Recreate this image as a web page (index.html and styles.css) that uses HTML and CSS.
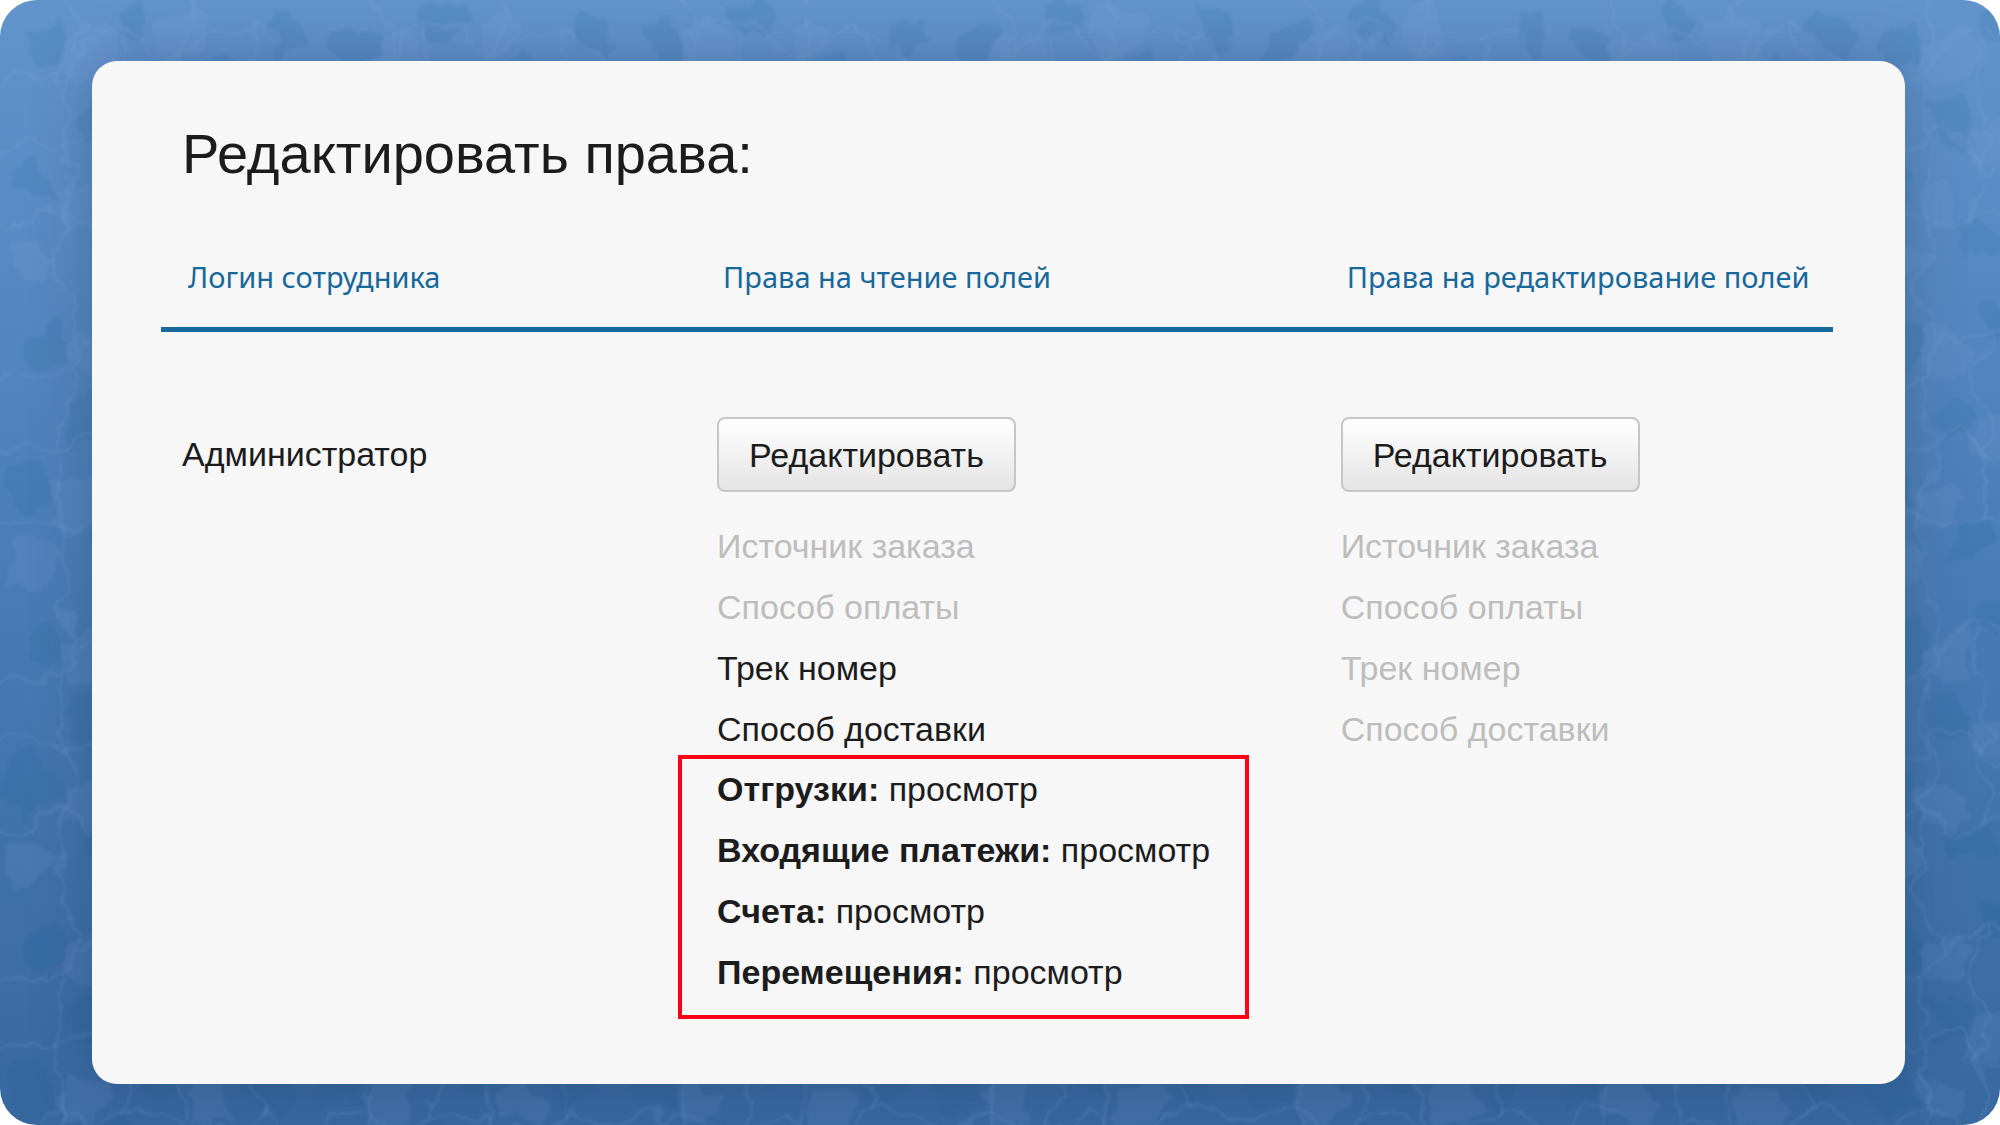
FILE: index.html
```html
<!DOCTYPE html>
<html lang="ru">
<head>
<meta charset="UTF-8">
<meta name="viewport" content="width=device-width, initial-scale=1">
<title>Редактировать права</title>
<link rel="stylesheet" href="styles.css">
</head>

<body>
<div class="page">
  <svg class="water" width="100%" height="100%" aria-hidden="true">
	<defs>
		<filter id="ripple" x="0" y="0" width="100%" height="100%">
			<feTurbulence type="fractalNoise" baseFrequency=".022" numOctaves="3" seed="4" result="noise"/>
			<feDisplacementMap in="SourceGraphic" in2="noise" scale="44" xChannelSelector="R" yChannelSelector="G"/>
			<feGaussianBlur stdDeviation="1"/>
		</filter>
		<pattern id="cells" width="310" height="300" patternUnits="userSpaceOnUse">
			<g fill="#0a4a86" fill-opacity=".09">
				<path d="M28 30l26-6 12 14-4 24-24 8-14-16z"/>
				<path d="M112 6l30-4 12 18-10 20-26-2z"/>
				<path d="M196 66l28-8 16 20-8 24-30 2-12-18z"/>
				<path d="M70 108l26-14 14 20-8 26-22 4z"/>
				<path d="M10 170l28-10 12 16 2 28-34 8-12-20z"/>
				<path d="M148 154l32-4 8 24-14 20-28-8z"/>
				<path d="M244 168l26-12 18 18-8 32-28 4-14-20z"/>
				<path d="M96 226l30-2 10 24-18 18-26-10z"/>
				<path d="M192 240l26-8 16 16-8 26-34 2z"/>
				<path d="M272 14l22 2 8 26-16 14-20-14z"/>
			</g>
			<g fill="#8ab4e4" fill-opacity=".1">
				<path d="M66 40l32-14 20 22-8 30-32 6-16-20z"/>
				<path d="M160 18l30-10 20 20-6 28-34 6z"/>
				<path d="M236 100l34-8 20 24-14 30-36-2-10-22z"/>
				<path d="M112 120l30-6 14 26-16 22-30-8z"/>
				<path d="M54 190l28-12 22 18-8 28-34 4z"/>
				<path d="M186 194l32-10 18 22-14 22-34-4z"/>
				<path d="M8 244l34-8 16 18-12 30-34 2z"/>
				<path d="M246 236l28-2 16 22-20 24-28-14z"/>
			</g>
			<g fill="none" stroke="#8ab4e4" stroke-opacity=".14" stroke-width="3">
				<path d="M0 84c22-14 40 6 62-10s22-44 58-46 30 30 58 28 40-30 70-26 36 40 62 54"/>
				<path d="M0 152c26-20 46 8 66-8s44-12 58 12 40-4 62-10 30 22 58 18 40-26 66-12"/>
				<path d="M0 226c30 4 38-20 62-12s28 22 56 10 44-14 66 6 52-8 70-16 34 10 56 12"/>
				<path d="M62 74c14 20-6 40 4 70s-8 44-4 70-14 50 0 86"/>
				<path d="M178 56c-10 28 14 50 8 90s-14 52-2 84-8 46 6 70"/>
				<path d="M62 0c8 24 20 20 16 50M190 0c-10 20 10 32-12 56M248 30c16 32-8 48 10 70s-16 44-14 64 22 30 10 50"/>
				<path d="M120 28c10 30-14 50 4 78s2 32 0 50 4 46-6 68"/>
			</g>
		</pattern>
	</defs>
	<g filter="url(#ripple)">
		<rect x="-5%" y="-5%" width="110%" height="110%" fill="url(#cells)"/>
	</g>
  </svg>

  <main class="card">
	<h1 class="title">Редактировать права:</h1>

	<table class="rights">
		<colgroup>
			<col class="col-login">
			<col class="col-read">
			<col class="col-edit">
		</colgroup>
		<thead>
			<tr>
				<th scope="col">Логин сотрудника</th>
				<th scope="col">Права на чтение полей</th>
				<th scope="col">Права на редактирование полей</th>
			</tr>
		</thead>
		<tbody>
			<tr>
				<td class="login">Администратор</td>
				<td>
					<button type="button" class="btn">Редактировать</button>
					<ul class="fields">
						<li class="off">Источник заказа</li>
						<li class="off">Способ оплаты</li>
						<li>Трек номер</li>
						<li>Способ доставки</li>
					</ul>
					<ul class="fields marked">
						<li><b>Отгрузки:</b> просмотр</li>
						<li><b>Входящие платежи:</b> просмотр</li>
						<li><b>Счета:</b> просмотр</li>
						<li><b>Перемещения:</b> просмотр</li>
					</ul>
				</td>
				<td>
					<button type="button" class="btn">Редактировать</button>
					<ul class="fields">
						<li class="off">Источник заказа</li>
						<li class="off">Способ оплаты</li>
						<li class="off">Трек номер</li>
						<li class="off">Способ доставки</li>
					</ul>
				</td>
			</tr>
		</tbody>
	</table>
  </main>
</div>
</body>
</html>
```

FILE: styles.css
```css
* {
	box-sizing: border-box;
}

body {
	margin: 0;
	background: #fff;
	color: #1c1c1c;
	font-family: "Liberation Sans", Arial, sans-serif;
	font-size: 34px;
}

.page {
	position: relative;
	min-height: 100vh;
	padding: 61px 95px 41px 92px;
	border-radius: 37px;
	overflow: hidden;
	display: flex;
	background: linear-gradient(#6294cc, #4a7db6 50%, #37689f);
}

/* background texture, sits under the card */
.water {
	position: absolute;
	top: 0;
	left: 0;
}

.card {
	position: relative;
	flex: 1;
	padding: 59px 72px 40px 69px;
	border-radius: 25px;
	background: #f7f7f7;
	box-shadow: 0 0 60px rgba(30, 50, 90, .3);
}

.title {
	margin: 0 0 49px;
	padding-left: 21px;
	font-size: 56px;
	line-height: 68px;
	font-weight: normal;
}

.rights {
	width: 100%;
	table-layout: fixed;
	border-collapse: collapse;
}

.col-login {
	width: 32%;
}

.col-read {
	width: 37.3%;
}

.rights th {
	padding: 20px 0 30px 27px;
	border-bottom: 5px solid #17689b;
	color: #17689b;
	font-family: "Noto Sans", Tahoma, sans-serif;
	font-size: 29px;
	line-height: 40px;
	font-weight: normal;
	text-align: left;
	white-space: nowrap;
}

.rights td {
	padding: 85px 0 0 21px;
	vertical-align: top;
}

.rights .login {
	line-height: 74px;
}

.btn {
	display: block;
	height: 75px;
	padding: 2px 30px 0;
	border: 2px solid #c6c6c6;
	border-radius: 8px;
	background: linear-gradient(#fff, #e4e4e4);
	color: inherit;
	font: inherit;
	cursor: pointer;
}

.fields {
	margin: 24px 0 0;
	padding: 0;
	list-style: none;
	line-height: 61px;
}

.off {
	color: #bdbdbd;
}

.marked {
	width: fit-content;
	margin: -5px 0 0 -39px;
	padding: 0 35px 12px;
	border: 4px solid #ff0016;
}
```
